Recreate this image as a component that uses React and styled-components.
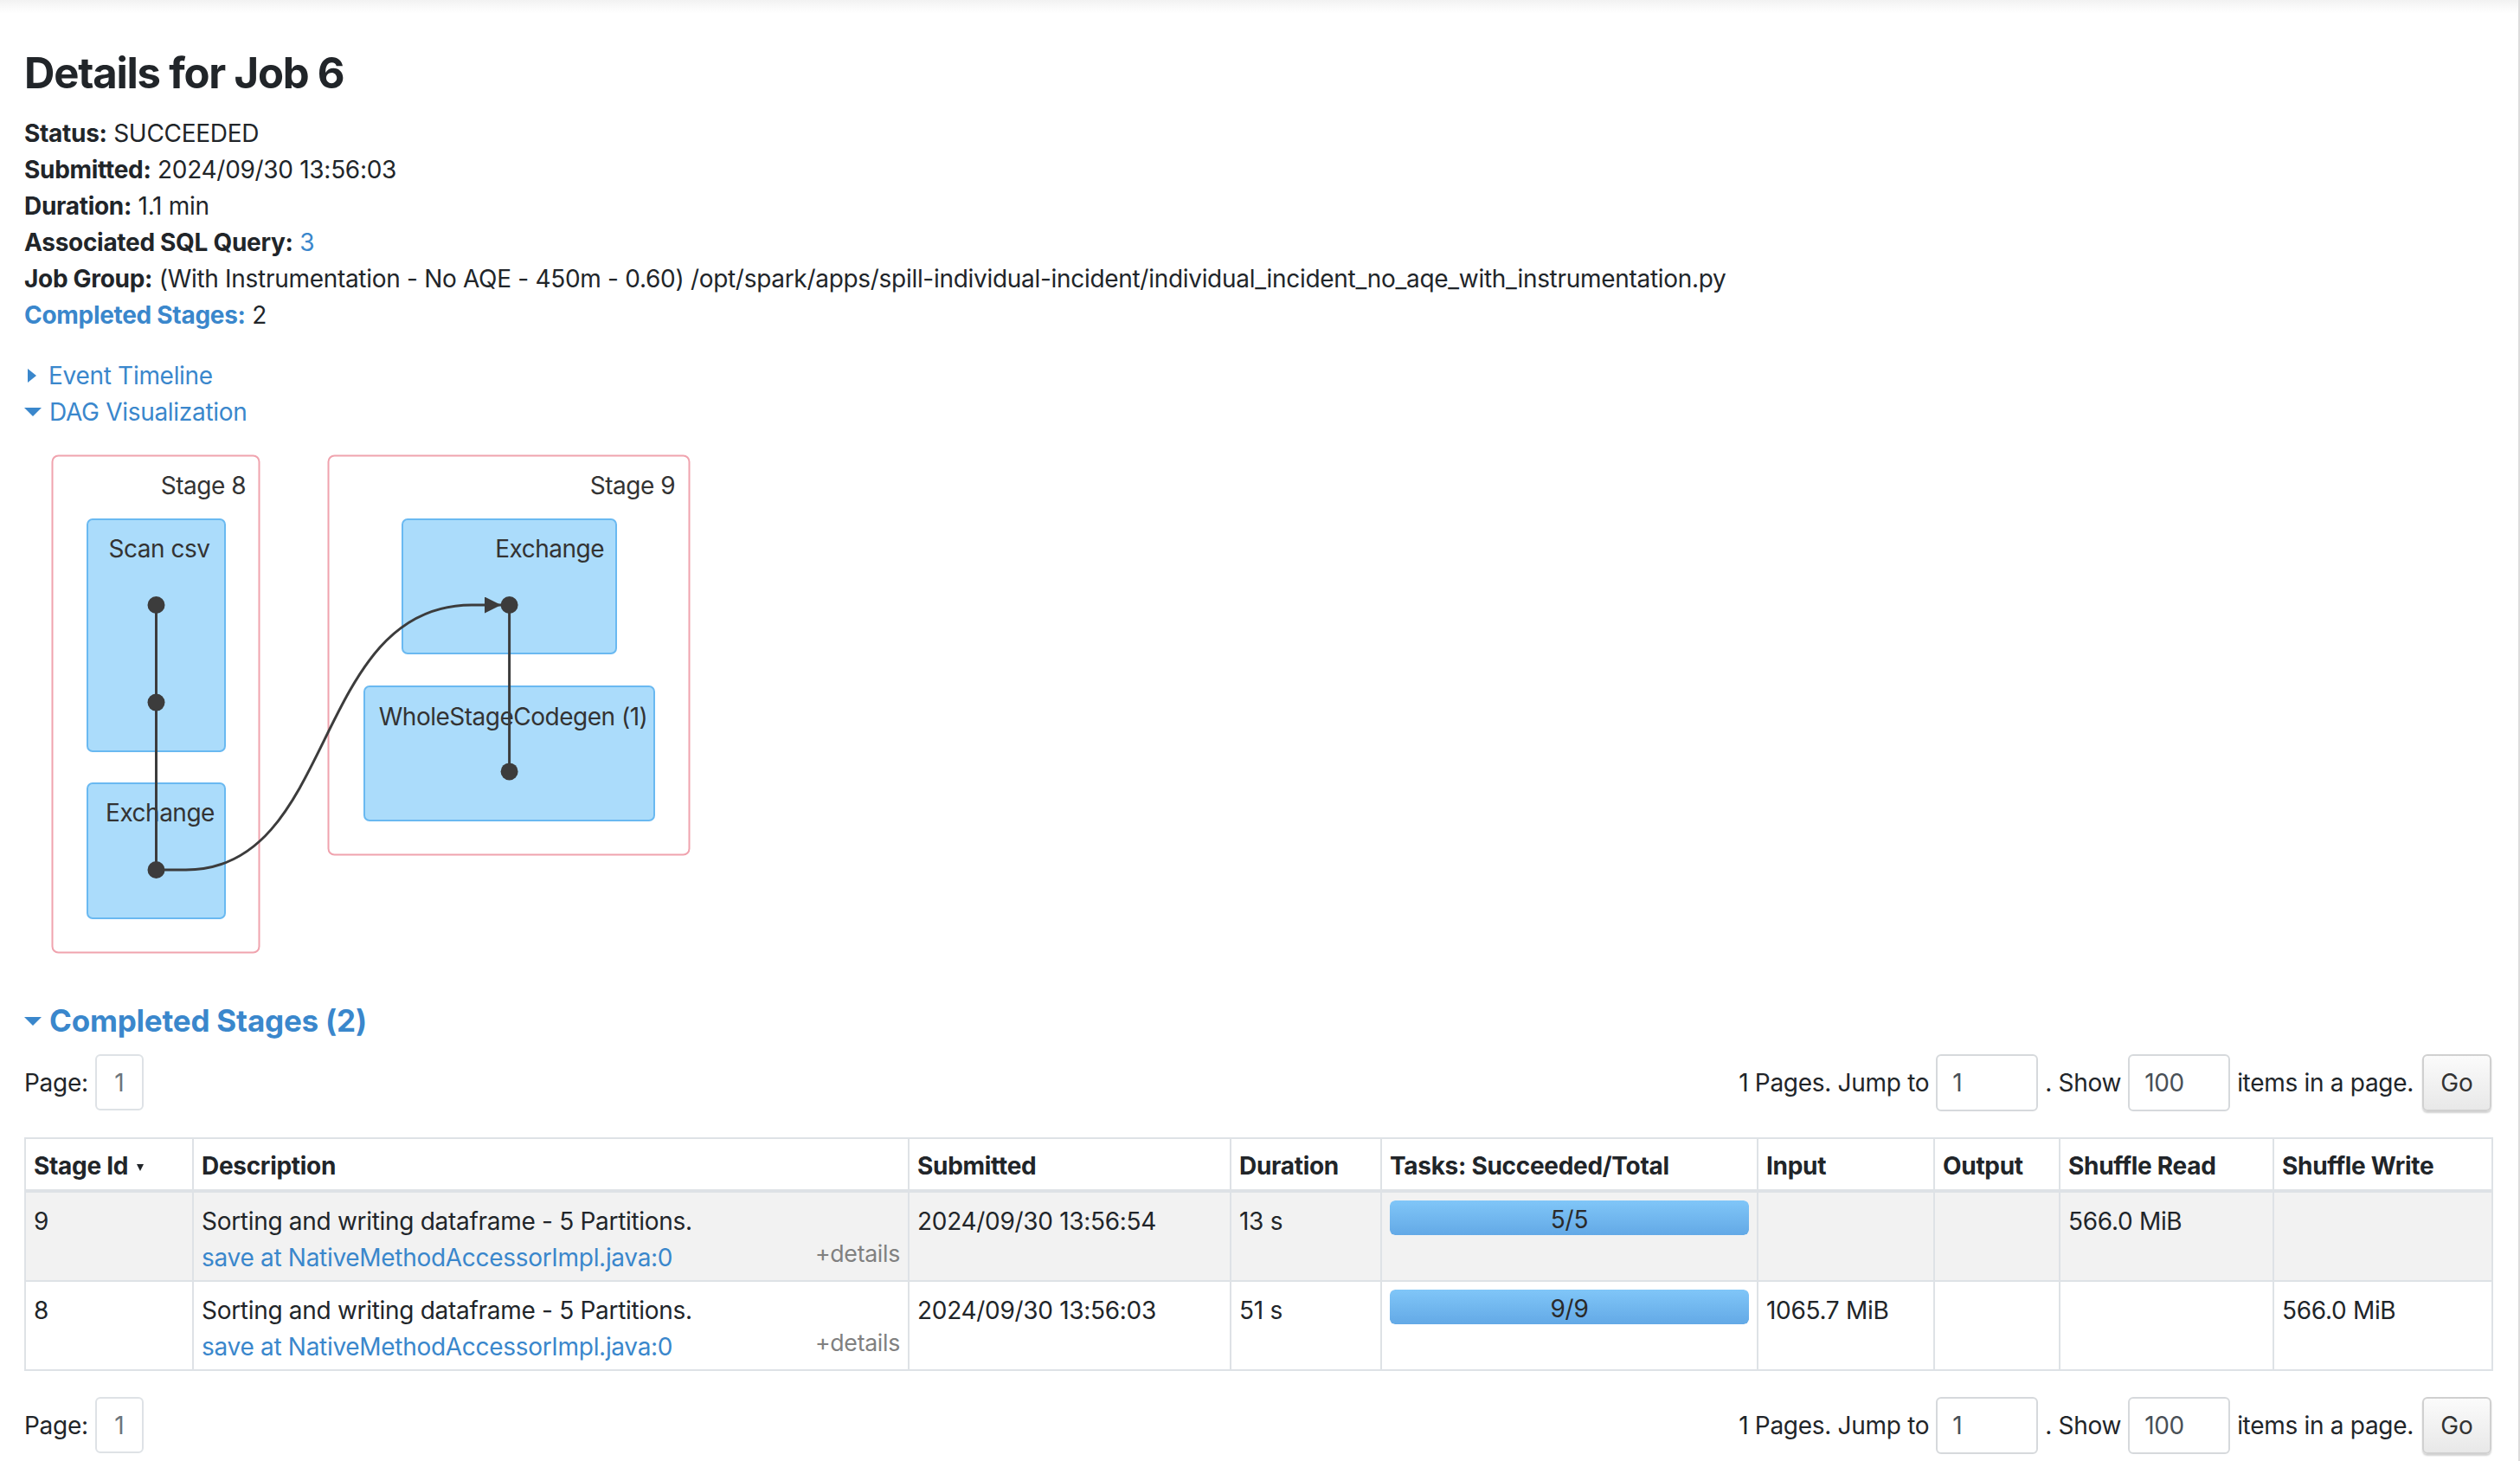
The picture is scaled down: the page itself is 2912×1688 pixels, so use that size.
import React from 'react';
import styled, { createGlobalStyle } from 'styled-components';

const Global = createGlobalStyle`
  html, body { margin: 0; padding: 0; background: #fff; }
  body {
    font-family: Inter, "Noto Sans", "Liberation Sans", sans-serif;
    color: #212529;
    font-size: 28px;
    line-height: 42px;
    letter-spacing: -0.3px;
  }
  * { box-sizing: border-box; }
`;

const LINK = '#3a87cc';
const BORDER = '#dee2e6';

const Page = styled.div`
  min-height: 1688px;
  border-right: 2px solid #dcdcdc;
  background: linear-gradient(to bottom, #f2f2f2 0px, #fbfbfb 10px, #ffffff 16px);
  padding: 55px 31px 0 28px;
`;

const Title = styled.h3`
  margin: 0;
  font-size: 49px;
  line-height: 59px;
  font-weight: 700;
  letter-spacing: -1.2px;
  color: #212529;
`;

const InfoList = styled.ul`
  list-style: none;
  margin: 19px 0 0;
  padding: 0;
`;

const InfoItem = styled.li`
  font-size: 28px;
  line-height: 42px;
  white-space: nowrap;
`;

const Label = styled.strong`
  font-weight: 700;
  color: ${(p) => (p.$link ? LINK : '#212529')};
`;

const Link = styled.a`
  color: ${LINK};
  text-decoration: none;
  cursor: pointer;
`;

const CollapseList = styled.div`
  margin-top: 28px;
`;

const CollapseRow = styled.div`
  display: flex;
  align-items: center;
  height: 42px;
  color: ${LINK};
  font-size: 28px;
`;

const Arrow = styled.span`
  display: inline-block;
  width: 0;
  height: 0;
  margin-right: ${(p) => (p.$open ? '9px' : '14px')};
  margin-left: ${(p) => (p.$open ? '0' : '4px')};
  ${(p) =>
    p.$open
      ? `border-left: 10px solid transparent; border-right: 10px solid transparent; border-top: 10px solid ${LINK};`
      : `border-top: 8px solid transparent; border-bottom: 8px solid transparent; border-left: 10px solid ${LINK};`}
`;

const DagSvg = styled.svg`
  display: block;
  margin-top: 16px;
  overflow: visible;
`;

const SectionTitle = styled.h4`
  margin: 58px 0 0;
  display: flex;
  align-items: center;
  font-size: 35px;
  line-height: 37px;
  font-weight: 700;
  color: ${LINK};
  letter-spacing: -0.2px;
`;

const PagerRow = styled.div`
  display: flex;
  justify-content: space-between;
  align-items: center;
  margin-top: ${(p) => p.$top}px;
  height: 65px;
`;

const PagerLeft = styled.div`
  display: flex;
  align-items: center;
  gap: 8px;
`;

const PagerRight = styled.div`
  display: flex;
  align-items: center;
  gap: 8px;
`;

const PageItem = styled.span`
  display: inline-flex;
  align-items: center;
  justify-content: center;
  width: 56px;
  height: 65px;
  border: 2px solid ${BORDER};
  border-radius: 6px;
  color: #6c757d;
  font-size: 28px;
`;

const NumInput = styled.input`
  width: 118px;
  height: 66px;
  border: 2px solid #d6d9dc;
  border-radius: 6px;
  padding: 0 17px;
  font-family: inherit;
  font-size: 28px;
  letter-spacing: -0.3px;
  color: #495057;
  background: #fff;
  outline: none;
`;

const GoButton = styled.button`
  width: 80px;
  height: 66px;
  border: 2px solid #d0d0d0;
  border-radius: 6px;
  background: linear-gradient(to bottom, #fbfbfb 0%, #e8e8e8 100%);
  box-shadow: 0 2px 2px rgba(0, 0, 0, 0.18);
  font-family: inherit;
  font-size: 28px;
  color: #333;
  padding: 0;
  margin-left: 2px;
`;

const Table = styled.table`
  margin-top: 31px;
  width: 100%;
  table-layout: fixed;
  border-collapse: collapse;
  border: 2px solid ${BORDER};
`;

const Th = styled.th`
  text-align: left;
  font-weight: 700;
  font-size: 28px;
  line-height: 42px;
  padding: 10px 9px 6px;
  border: 2px solid ${BORDER};
  border-bottom-width: 4px;
  white-space: nowrap;
`;

const SortArrow = styled.span`
  display: inline-block;
  width: 0;
  height: 0;
  margin-left: 10px;
  vertical-align: 4px;
  border-left: 4px solid transparent;
  border-right: 4px solid transparent;
  border-top: 8px solid #212529;
`;

const Tr = styled.tr`
  background: ${(p) => (p.$striped ? '#f2f2f2' : '#fff')};
`;

const Td = styled.td`
  vertical-align: top;
  font-size: 28px;
  line-height: 42px;
  padding: 12px 9px 5px;
  border: 2px solid ${BORDER};
`;

const LinkLine = styled.div`
  display: flex;
  justify-content: space-between;
  align-items: flex-start;
`;

const Details = styled.span`
  color: #808080;
  font-size: 26.7px;
  line-height: 32px;
  cursor: pointer;
`;

const Progress = styled.div`
  margin-top: -3px;
  height: 40px;
  border-radius: 6px;
  background: #f5f5f5;
  overflow: hidden;
`;

const ProgressBar = styled.div`
  height: 100%;
  padding-top: 4px;
  background: linear-gradient(to bottom, #80c6f8 0%, #63a9e6 100%);
  border-radius: 6px;
  display: flex;
  align-items: center;
  justify-content: center;
  font-size: 28px;
  color: #2a2a2a;
`;

const COLS = [194, 827, 372, 174, 435, 204, 145, 247, 253];

const rows = [
  { id: '9', submitted: '2024/09/30 13:56:54', duration: '13 s', done: 5, total: 5, input: '', output: '', read: '566.0 MiB', write: '' },
  { id: '8', submitted: '2024/09/30 13:56:03', duration: '51 s', done: 9, total: 9, input: '1065.7 MiB', output: '', read: '', write: '566.0 MiB' },
];

function Pager({ top }) {
  return (
    <PagerRow $top={top}>
      <PagerLeft>
        <span>Page:</span>
        <PageItem>1</PageItem>
      </PagerLeft>
      <PagerRight>
        <span>1 Pages. Jump to</span>
        <NumInput readOnly defaultValue="1" />
        <span>. Show</span>
        <NumInput readOnly defaultValue="100" />
        <span>items in a page.</span>
        <GoButton>Go</GoButton>
      </PagerRight>
    </PagerRow>
  );
}

function Dag() {
  const stageStroke = '#f0a3ae';
  const nodeFill = '#abdcfb';
  const nodeStroke = '#6ab9f1';
  const ink = '#3c3c3c';
  const textStyle = { fontFamily: 'Inter, "Noto Sans", sans-serif', fontSize: 28, fill: '#333', letterSpacing: '-0.5px' };
  return (
    <DagSvg width="800" height="590" viewBox="0 0 800 590">
      <defs>
        <marker id="arrowhead" viewBox="0 0 10 10" refX="10" refY="5" markerWidth="19" markerHeight="19" markerUnits="userSpaceOnUse" orient="auto">
          <path d="M0,0 L10,5 L0,10 z" fill={ink} />
        </marker>
      </defs>
      <rect x="32.5" y="13.5" width="239" height="574" rx="7" fill="#fff" stroke={stageStroke} strokeWidth="2" />
      <rect x="351.5" y="13.5" width="417" height="461" rx="7" fill="#fff" stroke={stageStroke} strokeWidth="2" />
      <text x="256" y="58" textAnchor="end" style={textStyle}>Stage 8</text>
      <text x="752" y="58" textAnchor="end" style={textStyle}>Stage 9</text>

      <rect x="73" y="87" width="159" height="268" rx="6" fill={nodeFill} stroke={nodeStroke} strokeWidth="2" />
      <rect x="73" y="392" width="159" height="156" rx="6" fill={nodeFill} stroke={nodeStroke} strokeWidth="2" />
      <rect x="437" y="87" width="247" height="155" rx="6" fill={nodeFill} stroke={nodeStroke} strokeWidth="2" />
      <rect x="393" y="280" width="335" height="155" rx="6" fill={nodeFill} stroke={nodeStroke} strokeWidth="2" />

      <text x="156" y="131" textAnchor="middle" style={textStyle}>Scan csv</text>
      <text x="157" y="436" textAnchor="middle" style={textStyle}>Exchange</text>
      <text x="670" y="131" textAnchor="end" style={textStyle}>Exchange</text>
      <text x="565" y="325" textAnchor="middle" style={textStyle}>WholeStageCodegen (1)</text>

      <line x1="152.5" y1="186" x2="152.5" y2="492" stroke={ink} strokeWidth="3" />
      <line x1="560.6" y1="186" x2="560.6" y2="378.4" stroke={ink} strokeWidth="3" />
      <path d="M153 492 L187 492 C362 492, 332 186, 517 186 L551 186" fill="none" stroke={ink} strokeWidth="3" markerEnd="url(#arrowhead)" />

      <circle cx="152.5" cy="186" r="10" fill={ink} />
      <circle cx="152.5" cy="298.6" r="10" fill={ink} />
      <circle cx="152.5" cy="492" r="10" fill={ink} />
      <circle cx="560.6" cy="186" r="10" fill={ink} />
      <circle cx="560.6" cy="378.4" r="10" fill={ink} />
    </DagSvg>
  );
}

export default function App() {
  return (
    <>
      <Global />
      <Page>
        <Title>Details for Job 6</Title>
        <InfoList>
          <InfoItem><Label>Status:</Label> SUCCEEDED</InfoItem>
          <InfoItem><Label>Submitted:</Label> 2024/09/30 13:56:03</InfoItem>
          <InfoItem><Label>Duration:</Label> 1.1 min</InfoItem>
          <InfoItem><Label>Associated SQL Query:</Label> <Link>3</Link></InfoItem>
          <InfoItem><Label>Job Group:</Label> (With Instrumentation - No AQE - 450m - 0.60) /opt/spark/apps/spill-individual-incident/individual_incident_no_aqe_with_instrumentation.py</InfoItem>
          <InfoItem><Label $link>Completed Stages:</Label> 2</InfoItem>
        </InfoList>
        <CollapseList>
          <CollapseRow><Arrow /><span>Event Timeline</span></CollapseRow>
          <CollapseRow><Arrow $open /><span>DAG Visualization</span></CollapseRow>
        </CollapseList>
        <Dag />
        <SectionTitle><Arrow $open /><span>Completed Stages (2)</span></SectionTitle>
        <Pager top={20} />
        <Table>
          <colgroup>
            {COLS.map((w, i) => <col key={i} style={{ width: w }} />)}
          </colgroup>
          <thead>
            <tr>
              <Th>Stage Id<SortArrow /></Th>
              <Th>Description</Th>
              <Th>Submitted</Th>
              <Th>Duration</Th>
              <Th>Tasks: Succeeded/Total</Th>
              <Th>Input</Th>
              <Th>Output</Th>
              <Th>Shuffle Read</Th>
              <Th>Shuffle Write</Th>
            </tr>
          </thead>
          <tbody>
            {rows.map((r, i) => (
              <Tr key={r.id} $striped={i % 2 === 0}>
                <Td>{r.id}</Td>
                <Td>
                  <div>Sorting and writing dataframe - 5 Partitions.</div>
                  <LinkLine>
                    <Link>save at NativeMethodAccessorImpl.java:0</Link>
                    <Details>+details</Details>
                  </LinkLine>
                </Td>
                <Td>{r.submitted}</Td>
                <Td>{r.duration}</Td>
                <Td>
                  <Progress>
                    <ProgressBar style={{ width: `${(r.done / r.total) * 100}%` }}>{r.done}/{r.total}</ProgressBar>
                  </Progress>
                </Td>
                <Td>{r.input}</Td>
                <Td>{r.output}</Td>
                <Td>{r.read}</Td>
                <Td>{r.write}</Td>
              </Tr>
            ))}
          </tbody>
        </Table>
        <Pager top={30} />
      </Page>
    </>
  );
}
